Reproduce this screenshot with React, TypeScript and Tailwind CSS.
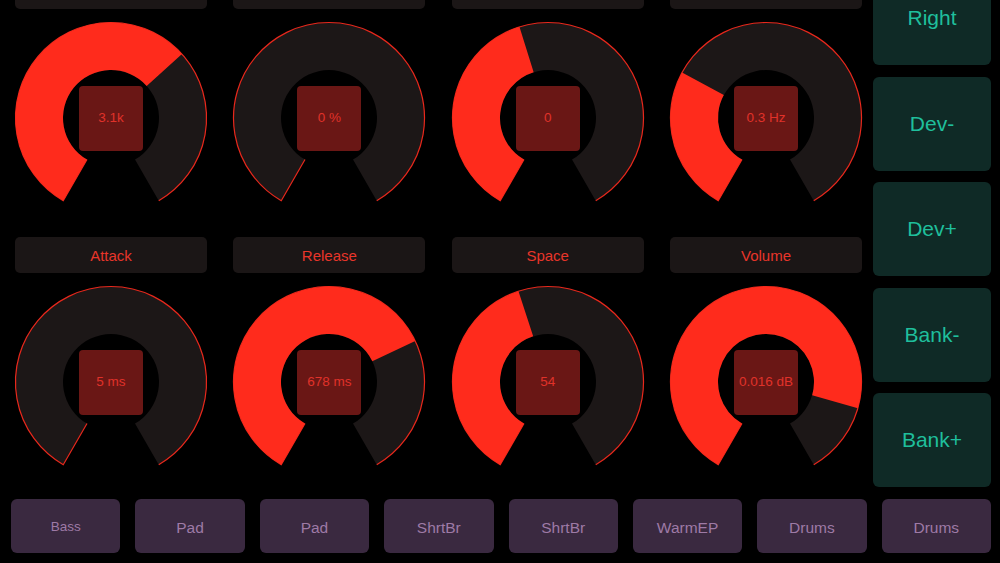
import React from "react";

const KNOBS = [
  [
    { label: "", value: "3.1k", f: 0.66 },
    { label: "", value: "0 %", f: 0 },
    { label: "", value: "0", f: 0.442 },
    { label: "", value: "0.3 Hz", f: 0.295 },
  ],
  [
    { label: "Attack", value: "5 ms", f: 0 },
    { label: "Release", value: "678 ms", f: 0.715 },
    { label: "Space", value: "54", f: 0.44 },
    { label: "Volume", value: "0.016 dB", f: 0.853 },
  ],
];

const SIDE = ["Right", "Dev-", "Dev+", "Bank-", "Bank+"];

const CLIPS = [
  { name: "Bass", small: true },
  { name: "Pad" },
  { name: "Pad" },
  { name: "ShrtBr" },
  { name: "ShrtBr" },
  { name: "WarmEP" },
  { name: "Drums" },
  { name: "Drums" },
];

const CX = 96;
const CY = 97;
const R = 95.5;
const r = 48;
const START = 210;
const SWEEP = 300;

const pt = (rad: number, a: number) => {
  const t = (a * Math.PI) / 180;
  return `${(CX + rad * Math.sin(t)).toFixed(2)} ${(CY - rad * Math.cos(t)).toFixed(2)}`;
};

const sector = (a0: number, a1: number) => {
  const large = a1 - a0 > 180 ? 1 : 0;
  return `M ${pt(R, a0)} A ${R} ${R} 0 ${large} 1 ${pt(R, a1)} L ${pt(r, a1)} A ${r} ${r} 0 ${large} 0 ${pt(r, a0)} Z`;
};

const Knob = ({ value, f }: { value: string; f: number }) => {
  const end = START + SWEEP;
  return (
    <div className="relative flex h-[194px] w-[192px] items-center justify-center">
      <svg className="absolute inset-0 overflow-visible" width="192" height="194" viewBox="0 0 192 194">
        <path d={sector(START, end)} fill="#1c1717" />
        <path
          d={`M ${pt(r, START)} L ${pt(R, START)} A ${R} ${R} 0 1 1 ${pt(R, end)}`}
          fill="none"
          stroke="#e8281c"
          strokeWidth="1.2"
        />
        {f > 0 && <path d={sector(START, START + SWEEP * f)} fill="#ff2b1c" />}
      </svg>
      <div className="relative flex h-[65px] w-[64px] items-center justify-center rounded-[4px] bg-[#6a1715] pt-[1px] text-[13.5px] text-[#e0322a]">
        {value}
      </div>
    </div>
  );
};

export default function App() {
  return (
    <div className="h-[563px] w-[1000px] overflow-hidden bg-black font-['Liberation_Sans',Arial,sans-serif]">
      <div className="mt-[-27px] flex flex-col">
        <div className="flex items-start gap-[11px] pl-[15px] pr-[9px]">
          <div className="flex w-[847px] flex-col gap-[22px]">
            {KNOBS.map((row, i) => (
              <div key={i} className="grid grid-cols-4 gap-x-[26.3px]">
                {row.map((k, j) => (
                  <div key={j} className="flex flex-col gap-[12px]">
                    <div className="flex h-[36px] items-center justify-center rounded-[5px] bg-[#1b1616] pt-[2px] text-[15px] text-[#e8352a]">
                      {k.label}
                    </div>
                    <Knob value={k.value} f={k.f} />
                  </div>
                ))}
              </div>
            ))}
          </div>
          <div className="mt-[-2px] flex w-[118px] flex-col gap-[11.5px]">
            {SIDE.map((s) => (
              <div
                key={s}
                className="flex h-[94px] items-center justify-center rounded-[6px] bg-[#0f2a26] text-[21px] text-[#1fbf9c]"
              >
                {s}
              </div>
            ))}
          </div>
        </div>
        <div className="mt-[12px] grid grid-cols-8 gap-x-[15px] pl-[11px] pr-[9px]">
          {CLIPS.map((c, i) => (
            <div
              key={i}
              className={`flex h-[54px] items-center justify-center rounded-[6px] bg-[#3a2940] pt-[3px] text-[#9e7aa6] ${c.small ? "text-[13.5px]" : "text-[15.5px]"}`}
            >
              {c.name}
            </div>
          ))}
        </div>
      </div>
    </div>
  );
}
